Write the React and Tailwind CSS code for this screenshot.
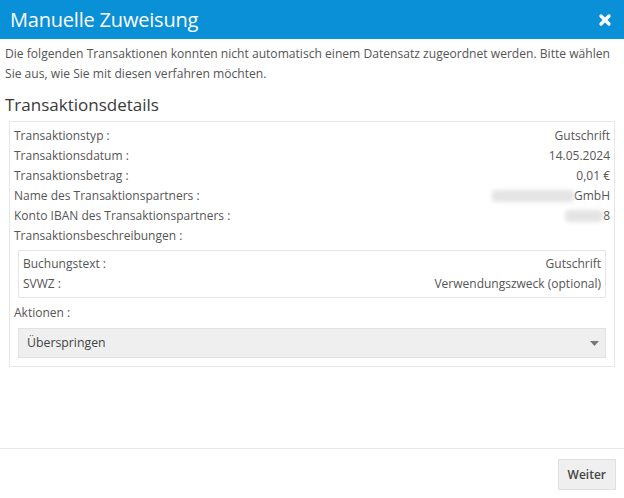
import { X } from 'lucide-react'

const ROWS = [
  { label: 'Transaktionstyp :', value: 'Gutschrift' },
  { label: 'Transaktionsdatum :', value: '14.05.2024' },
  { label: 'Transaktionsbetrag :', value: '0,01 €' },
  { label: 'Name des Transaktionspartners :', value: 'GmbH', blur: 'w-[82px]' },
  { label: 'Konto IBAN des Transaktionspartners :', value: '8', blur: 'w-[38px]' },
]

function Row({ label, value, blur }) {
  return (
    <div className="flex justify-between h-5 items-center">
      <span>{label}</span>
      <span className="flex items-center">
        {blur && <span className={`${blur} h-3 bg-[#e4e4e4] blur-[2px] rounded-sm`} />}
        {value}
      </span>
    </div>
  )
}

export default function App() {
  return (
    <div className="w-[624px] h-[498px] bg-white flex flex-col text-[12px] text-[#555] font-['Open_Sans',sans-serif] overflow-hidden">
      <header className="h-[39px] bg-[#0a90d7] flex items-center justify-between pl-[10px] pr-[11px] shrink-0">
        <h1 className="text-white text-[20px] leading-none tracking-[-0.2px]">Manuelle Zuweisung</h1>
        <X className="text-white" size={16} strokeWidth={5} />
      </header>
      <div className="flex-1 px-[5px] pt-[5px]">
        <p className="leading-5 text-[12.1px]">
          Die folgenden Transaktionen konnten nicht automatisch einem Datensatz zugeordnet werden. Bitte wählen Sie aus, wie Sie mit diesen verfahren möchten.
        </p>
        <h2 className="mt-[9px] text-[17px] font-medium text-[#3a3a3a] leading-6">Transaktionsdetails</h2>
        <div className="mt-[4px] mx-1 border border-[#e6e6e6] px-1 pt-[4px] pb-2">
          {ROWS.map(r => <Row key={r.label} {...r} />)}
          <div className="h-5 flex items-center">Transaktionsbeschreibungen :</div>
          <div className="mt-[4px] mx-1 border border-[#e6e6e6] px-1 py-[3px]">
            <Row label="Buchungstext :" value="Gutschrift" />
            <Row label="SVWZ :" value="Verwendungszweck (optional)" />
          </div>
          <div className="h-5 flex items-center mt-[5px]">Aktionen :</div>
          <div className="mt-[5px] mx-1 h-[30px] bg-[#efefef] border border-[#e2e2e2] flex items-center justify-between pl-2 pr-[6px] text-[12.3px]">
            <span className="text-[#444]">Überspringen</span>
            <svg width="9" height="5" viewBox="0 0 9 5"><path d="M0 0h9L4.5 5z" fill="#777" /></svg>
          </div>
        </div>
      </div>
      <footer className="h-[50px] border-t border-[#e8e8e8] flex items-start justify-end pt-[10px] pr-[8px] shrink-0">
        <button className="h-[31px] px-[9px] bg-[#efefef] border border-[#e0e0e0] text-[#444] text-[12px] font-semibold">
          Weiter
        </button>
      </footer>
    </div>
  )
}
